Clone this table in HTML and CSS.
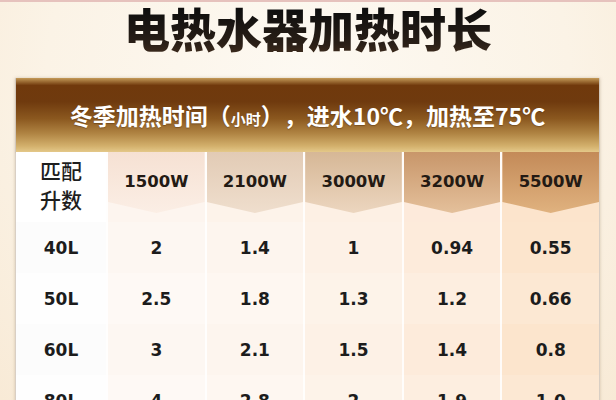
FILE: index.html
```html
<!DOCTYPE html>
<html lang="zh">
<head>
<meta charset="utf-8">
<link rel="stylesheet" href="styles.css">
</head>
<body>
<div class="page">
  <h1 class="title">电热水器加热时长</h1>
  <div class="card">
    <div class="banner">冬季加热时间<span class="paren">（<small>小时</small>）</span>，进水10℃，加热至75℃</div>
    <div class="grid">
      <div class="hd c0"><span class="lbl">匹配<br>升数</span></div>
      <div class="hd c1"><span class="tag">1500W</span></div>
      <div class="hd c2"><span class="tag">2100W</span></div>
      <div class="hd c3"><span class="tag">3000W</span></div>
      <div class="hd c4"><span class="tag">3200W</span></div>
      <div class="hd c5"><span class="tag">5500W</span></div>

      <div class="cell c0">40L</div><div class="cell c1">2</div><div class="cell c2">1.4</div><div class="cell c3">1</div><div class="cell c4">0.94</div><div class="cell c5">0.55</div>
      <div class="cell c0 alt">50L</div><div class="cell c1 alt">2.5</div><div class="cell c2 alt">1.8</div><div class="cell c3 alt">1.3</div><div class="cell c4 alt">1.2</div><div class="cell c5 alt">0.66</div>
      <div class="cell c0">60L</div><div class="cell c1">3</div><div class="cell c2">2.1</div><div class="cell c3">1.5</div><div class="cell c4">1.4</div><div class="cell c5">0.8</div>
      <div class="cell c0 alt">80L</div><div class="cell c1 alt">4</div><div class="cell c2 alt">2.8</div><div class="cell c3 alt">2</div><div class="cell c4 alt">1.9</div><div class="cell c5 alt">1.0</div>
    </div>
  </div>
</div>
</body>
</html>
```
FILE: styles.css
```css
html, body {
  margin: 0;
  padding: 0;
}
body {
  width: 616px;
  height: 400px;
  overflow: hidden;
  background: radial-gradient(ellipse at 50% 20%, #fdf9f2 0%, #fbf3e6 60%, #f8ead6 100%);
  font-family: "Noto Sans CJK SC", "Noto Sans", sans-serif;
}
.page {
  border-top: 2px solid #e6c2bd;
  height: 398px;
  box-sizing: border-box;
}
.title {
  margin: 0;
  height: 76px;
  text-align: center;
  font-size: 46px;
  line-height: 50px;
  font-weight: 900;
  background: linear-gradient(180deg, #0e0e0e 10%, #2a1f17 55%, #6a4628 100%);
  -webkit-background-clip: text;
  background-clip: text;
  color: transparent;
}
.card {
  margin-left: 15px;
  width: 585px;
  background: #fff;
  box-shadow: 0 0 3px rgba(150, 120, 90, 0.35);
  border-left: 1px solid #d9cfc4;
  border-right: 1px solid #d9cfc4;
  box-sizing: border-box;
}
.banner {
  height: 74px;
  display: flex;
  align-items: center;
  justify-content: center;
  color: #fff;
  font-size: 23px;
  font-weight: 700;
  text-shadow: 0 1px 1px rgba(60, 30, 0, 0.35);
  background: linear-gradient(180deg, #c49a58 0, #70390c 10%, #6f3a0e 32%, #8b581f 55%, #b08443 75%, #d3b06c 92%, #e4c889 100%);
  box-shadow: 0 1px 1px rgba(120, 100, 80, 0.4);
}
.paren small {
  font-size: 15px;
}
.grid {
  display: grid;
  grid-template-columns: 90px repeat(5, 1fr);
  grid-template-rows: 70px repeat(4, 51px);
}
.hd {
  display: flex;
  justify-content: center;
}
.hd.c0 {
  align-items: center;
  background: #fff;
}
.lbl {
  font-size: 21px;
  line-height: 29px;
  font-weight: 500;
  color: #1e1e1e;
  text-align: center;
  margin-top: -4px;
}
.tag {
  width: 100%;
  height: 61px;
  display: flex;
  align-items: center;
  justify-content: center;
  padding-bottom: 2px;
  box-sizing: border-box;
  clip-path: polygon(0 0, 100% 0, 100% 82%, 50% 100%, 0 82%);
  font-family: "DejaVu Sans", sans-serif;
  font-weight: 700;
  font-size: 16.5px;
  color: #231a14;
}
.c1, .c2, .c3, .c4, .c5 {
  border-left: 2px solid rgba(255, 255, 255, 0.85);
}
.hd.c1 { background: #fdf5ef; }
.hd.c2 { background: #fdf3ea; }
.hd.c3 { background: #fdf0e4; }
.hd.c4 { background: #fdeadb; }
.hd.c5 { background: #fce4cc; }
.hd.c1 .tag { background: linear-gradient(180deg, #f6e1d3, #fbeee5); }
.hd.c2 .tag { background: linear-gradient(180deg, #e2cbb5, #efdecd); }
.hd.c3 .tag { background: linear-gradient(180deg, #d6b796, #ecd6bf); }
.hd.c4 .tag { background: linear-gradient(180deg, #c8966a, #e4c09b); }
.hd.c5 .tag { background: linear-gradient(180deg, #c38a58, #e0b27f); }
.cell {
  display: flex;
  align-items: center;
  justify-content: center;
  font-family: "DejaVu Sans", sans-serif;
  font-weight: 700;
  font-size: 17px;
  color: #1c1c1c;
}
.cell.c0 { background: #fcfcfc; }
.cell.c1 { background: #fdf7f2; }
.cell.c2 { background: #fdf5ee; }
.cell.c3 { background: #fdf1e6; }
.cell.c4 { background: #fdebdb; }
.cell.c5 { background: #fce5cd; }
.cell.c0.alt { background: #fefefe; }
.cell.c1.alt { background: #fef9f5; }
.cell.c2.alt { background: #fef7f1; }
.cell.c3.alt { background: #fdf3e9; }
.cell.c4.alt { background: #fdeee0; }
.cell.c5.alt { background: #fce8d3; }
```
